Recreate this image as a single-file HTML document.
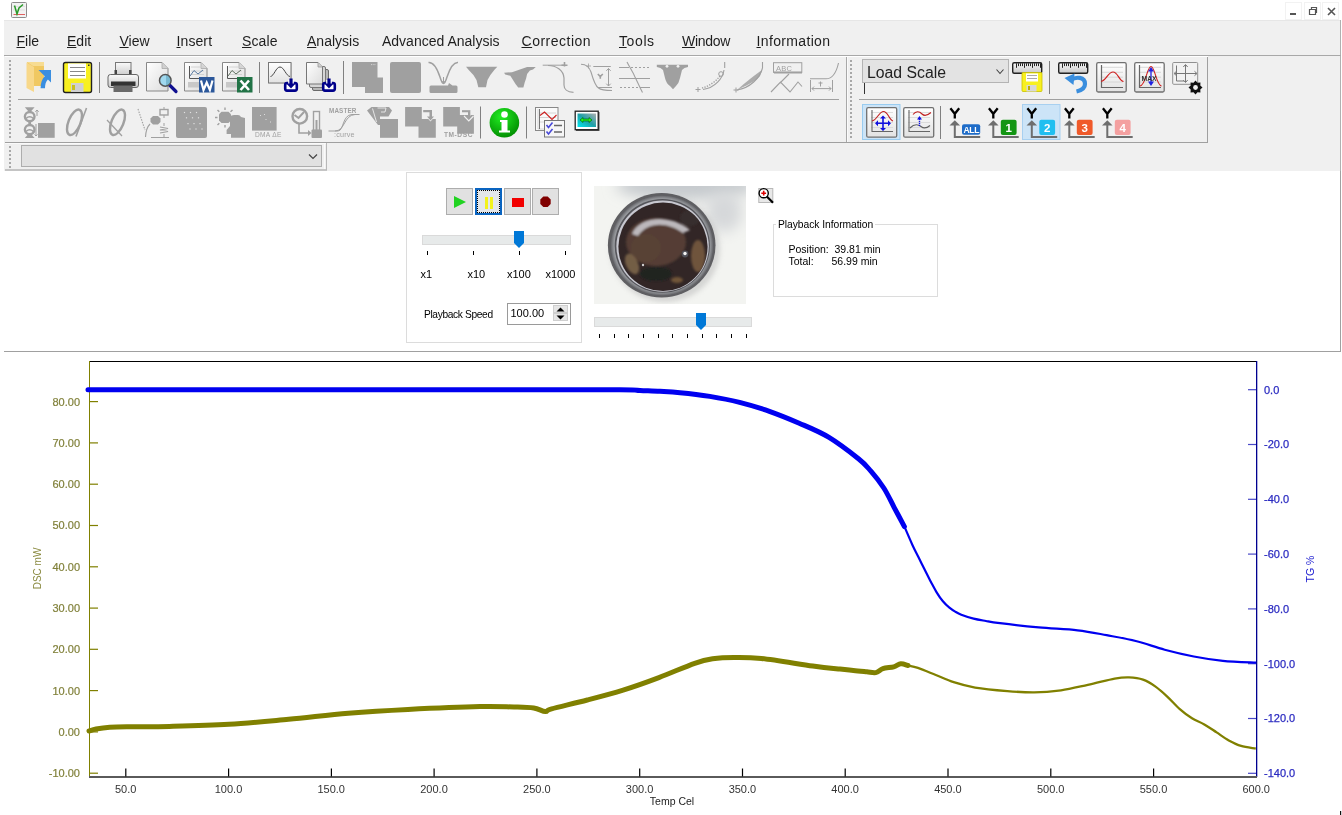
<!DOCTYPE html><html><head><meta charset="utf-8"><title>app</title><style>
html,body{margin:0;padding:0;}
body{width:1342px;height:815px;overflow:hidden;background:#fff;position:relative;will-change:transform;font-family:"Liberation Sans",sans-serif;color:#000;}
.a{position:absolute;}
.mn{position:absolute;top:33px;font-size:14px;color:#1e1e1e;white-space:pre;line-height:16px;}
.mn u{text-decoration:underline;text-underline-offset:0.8px;text-decoration-thickness:1px;}
.grip{position:absolute;width:2px;background:repeating-linear-gradient(to bottom,#a8a8a8 0,#a8a8a8 2px,transparent 2px,transparent 4px);}
.sep{position:absolute;width:1px;background:#a0a0a0;}
.ic{position:absolute;width:32px;height:32px;}
.lbl{position:absolute;white-space:pre;}
</style></head><body>
<svg class="a" style="left:11px;top:2px" width="16" height="16" viewBox="0 0 16 16">
<rect x="0.5" y="0.5" width="15" height="15" rx="1" fill="#f2f2f2" stroke="#8c8c8c"/>
<path d="M2 4.5H14M2 8H14" stroke="#dcdcdc" stroke-width="0.8"/>
<path d="M2.5 12.5 H14" stroke="#e06060" stroke-width="1"/>
<path d="M3.5 3.5 L6 12 L8 6 L12 2.5" stroke="#2a9a2a" stroke-width="1.5" fill="none"/>
</svg>
<div class="a" style="left:1285px;top:2px;width:17px;height:18px;background:#fff;border:1px solid #f2f2f2;box-sizing:border-box"></div>
<div class="a" style="left:1290px;top:13px;width:6px;height:2px;background:#555"></div>
<div class="a" style="left:1304px;top:2px;width:17px;height:18px;background:#fff;border:1px solid #f2f2f2;box-sizing:border-box"></div>
<svg class="a" style="left:1308px;top:6px" width="10" height="10" viewBox="0 0 10 10"><path d="M1.5 3.5h6v5h-6z M3.5 3.5v-2h5v5h-1" fill="none" stroke="#555" stroke-width="1.2"/></svg>
<div class="a" style="left:1322px;top:2px;width:17px;height:18px;background:#fff;border:1px solid #f2f2f2;box-sizing:border-box"></div>
<svg class="a" style="left:1327px;top:7px" width="9" height="9" viewBox="0 0 9 9"><path d="M1 1L8 8M8 1L1 8" stroke="#555" stroke-width="1.6"/></svg>
<div class="a" style="left:4px;top:20px;width:1337px;height:151px;background:#f0f0f0"></div>
<div class="a" style="left:4px;top:20px;width:1337px;height:1px;background:#e6e6e6"></div>
<div class="a" style="left:1340px;top:20px;width:1px;height:151px;background:#b0b0b0"></div>
<div class="a" style="left:4px;top:55px;width:1337px;height:1px;background:#a8a8a8"></div>
<div class="mn" style="left:16.5px;letter-spacing:0px"><u>F</u>ile</div>
<div class="mn" style="left:67px;letter-spacing:0px"><u>E</u>dit</div>
<div class="mn" style="left:119.5px;letter-spacing:0px"><u>V</u>iew</div>
<div class="mn" style="left:176.5px;letter-spacing:0.1px"><u>I</u>nsert</div>
<div class="mn" style="left:242px;letter-spacing:0.1px"><u>S</u>cale</div>
<div class="mn" style="left:307px;letter-spacing:0px"><u>A</u>nalysis</div>
<div class="mn" style="left:382px;letter-spacing:0px">Advanced Analysis</div>
<div class="mn" style="left:521.5px;letter-spacing:0.5px"><u>C</u>orrection</div>
<div class="mn" style="left:619px;letter-spacing:0.6px"><u>T</u>ools</div>
<div class="mn" style="left:682px;letter-spacing:-0.3px"><u>W</u>indow</div>
<div class="mn" style="left:756.5px;letter-spacing:0.35px"><u>I</u>nformation</div>
<div class="a" style="left:5px;top:56px;width:1203px;height:1px;background:#fff"></div>
<div class="a" style="left:846px;top:57px;width:1px;height:85px;background:#a8a8a8"></div><div class="a" style="left:847px;top:57px;width:1px;height:85px;background:#fafafa"></div>
<div class="a" style="left:1207px;top:57px;width:1px;height:85px;background:#a0a0a0"></div>
<div class="a" style="left:5px;top:142px;width:1203px;height:1px;background:#a0a0a0"></div>
<div class="a" style="left:18px;top:99px;width:821px;height:1px;background:#a0a0a0"></div>
<div class="a" style="left:859px;top:99px;width:341px;height:1px;background:#a0a0a0"></div>
<div class="grip" style="left:9px;top:60px;height:80px"></div>
<div class="grip" style="left:850px;top:60px;height:80px"></div>
<div class="a" style="left:5px;top:169px;width:322px;height:2px;background:#c4c4c4"></div>
<div class="a" style="left:5px;top:143px;width:321px;height:1px;background:#fafafa"></div>
<div class="a" style="left:324px;top:144px;width:1px;height:25px;background:#fafafa"></div>
<div class="a" style="left:326px;top:143px;width:1px;height:27px;background:#b8b8b8"></div>
<div class="grip" style="left:9px;top:146px;height:22px"></div>
<div class="a" style="left:21px;top:145px;width:301px;height:22px;background:#e1e1e1;border:1px solid #adadad;box-sizing:border-box"></div>
<svg class="a" style="left:308px;top:153px" width="10" height="7" viewBox="0 0 10 7"><path d="M1 1.5L5 5.5L9 1.5" stroke="#444" stroke-width="1.2" fill="none"/></svg>
<svg class="a" style="left:0;top:0" width="1342" height="175" viewBox="0 0 1342 175">
<defs>
<linearGradient id="pg" x1="0" y1="0" x2="1" y2="1"><stop offset="0" stop-color="#ffffff"/><stop offset="1" stop-color="#dcdcdc"/></linearGradient>
<linearGradient id="pr" x1="0" y1="0" x2="0" y2="1"><stop offset="0" stop-color="#fafafa"/><stop offset="1" stop-color="#c8c8c8"/></linearGradient>
<linearGradient id="bx" x1="0" y1="0" x2="0" y2="1"><stop offset="0" stop-color="#ffffff"/><stop offset="1" stop-color="#e2e2e2"/></linearGradient>
<radialGradient id="grn" cx="0.4" cy="0.3" r="0.75"><stop offset="0" stop-color="#22ee22"/><stop offset="1" stop-color="#008a00"/></radialGradient>
<linearGradient id="mon" x1="0" y1="1" x2="1" y2="0"><stop offset="0" stop-color="#00e8f0"/><stop offset="0.5" stop-color="#20a0a8"/><stop offset="1" stop-color="#b0b0b0"/></linearGradient>
<linearGradient id="lens" x1="0" y1="0" x2="1" y2="0"><stop offset="0" stop-color="#a0d8ee"/><stop offset="0.55" stop-color="#a0d8ee"/><stop offset="0.55" stop-color="#78b8d0"/></linearGradient>
</defs>
<path d="M27 62 H44 V86 H34 Z" fill="#f0c862"/><path d="M27 62 H44 V66 H33 Z" fill="#f7dc92"/>
<path d="M26.5 62.5 L34 67 V92 L26.5 88 Z" fill="#f8d88a"/>
<path d="M38.5 70 H51 V82.5 L47.9 79.4 C45.8 81.6 45 84.5 45 88.3 L40.6 88.3 C40.6 83 42 79.2 44.8 76.3 Z" fill="#3a8ee0"/>
<rect x="63.5" y="62.5" width="28" height="30" rx="2" fill="#f8f020" stroke="#222" stroke-width="1.4"/>
<rect x="68" y="63.5" width="18" height="15" fill="#fff"/>
<path d="M70 67.5H85M70 71.5H85M70 75.5H85" stroke="#888" stroke-width="1"/>
<rect x="71" y="83" width="12.5" height="9" fill="#d0d0d0"/>
<rect x="72" y="85" width="3" height="5" fill="#c8c020"/>
<rect x="88" y="64.5" width="1.5" height="1.5" fill="#333"/>
<rect x="99" y="62" width="1" height="31" fill="#808080"/>
<rect x="115.5" y="62.5" width="15.5" height="14" fill="url(#pr)" stroke="#777" stroke-width="1"/>
<rect x="114.5" y="70" width="2.5" height="7" fill="#444"/><rect x="129" y="70" width="2.5" height="7" fill="#444"/>
<rect x="108" y="74.5" width="30.5" height="13" rx="2.5" fill="url(#pr)" stroke="#666" stroke-width="1"/>
<rect x="111" y="81.5" width="24.5" height="4.5" fill="#333"/>
<rect x="113.5" y="85.5" width="19" height="6.5" fill="#6a6a6a"/>
<path d="M146.5 62.5 H162 L168 68.5 V91 H146.5 Z" fill="url(#pg)" stroke="#888" stroke-width="1"/>
<path d="M162 62.5 V68.5 H168" fill="#d0d0d0" stroke="#aaa" stroke-width="0.8"/>
<path d="M169.5 85 L176 91.5" stroke="#101090" stroke-width="3.2" stroke-linecap="round"/>
<circle cx="165.3" cy="80.4" r="5.8" fill="url(#lens)" stroke="#555" stroke-width="1.5"/>
<path d="M184.5 62.5 H201 L207 68.5 V91 H184.5 Z" fill="url(#pg)" stroke="#888" stroke-width="1"/>
<path d="M201 62.5 V68.5 H207" fill="#d8d8d8" stroke="#aaa" stroke-width="0.8"/>
<path d="M189.5 66 V78.5 H204" fill="none" stroke="#555" stroke-width="1"/>
<path d="M191 67H204M191 71H204M191 74.5H204" stroke="#ccc" stroke-width="0.8"/>
<path d="M190 76 L194 70.5 L198 74 L203 70" fill="none" stroke="#5a7aa0" stroke-width="1"/>
<rect x="188" y="82" width="13" height="5.5" fill="#c8c8c8"/>
<rect x="199" y="77" width="15.5" height="15.5" fill="#2b579a"/>
<path d="M201 80.5 L203.5 90 L206.7 82.5 L209.9 90 L212.5 80.5" fill="none" stroke="#fff" stroke-width="2.2" stroke-linejoin="miter"/>
<path d="M222.5 62.5 H239 L245 68.5 V91 H222.5 Z" fill="url(#pg)" stroke="#888" stroke-width="1"/>
<path d="M239 62.5 V68.5 H245" fill="#d8d8d8" stroke="#aaa" stroke-width="0.8"/>
<path d="M227.5 66 V78.5 H242" fill="none" stroke="#555" stroke-width="1"/>
<path d="M229 67H242M229 71H242M229 74.5H242" stroke="#ccc" stroke-width="0.8"/>
<path d="M228 76 L232 70.5 L236 74 L241 70" fill="none" stroke="#607060" stroke-width="1"/>
<rect x="226" y="82" width="13" height="5.5" fill="#c8c8c8"/>
<rect x="237" y="77" width="15.5" height="15.5" fill="#217346"/>
<path d="M240.5 80.5 L249 90 M249 80.5 L240.5 90" stroke="#fff" stroke-width="2.6"/>
<rect x="259" y="62" width="1" height="31" fill="#808080"/>
<rect x="269" y="63" width="23" height="20.5" fill="#d0d0d0"/>
<rect x="268.5" y="62.5" width="22.5" height="20.5" fill="url(#bx)" stroke="#777" stroke-width="1"/>
<path d="M270.5 76.5 C274 76 276 67 280 67 C284 67 286 76 290 76.5" fill="none" stroke="#444" stroke-width="1"/>
<rect x="285.2" y="83" width="11.6" height="7.6" rx="1.8" fill="#fff" stroke="#00008a" stroke-width="2.6"/><rect x="288.2" y="80" width="5.6" height="3.5" fill="#fff"/><rect x="289.4" y="78.5" width="3.2" height="6" fill="#00008a"/><path d="M286.8 84 H295.2 L291 88.6 Z" fill="#00008a"/>
<rect x="312.5" y="69.5" width="16" height="21" rx="1.5" fill="#b8b8b8" stroke="#6a6a6a" stroke-width="1"/>
<rect x="309.5" y="66.5" width="16" height="21" rx="1.5" fill="#d6d6d6" stroke="#777" stroke-width="1"/>
<path d="M306.5 62.5 H318 L322.5 67 V84 H306.5 Z" fill="url(#pg)" stroke="#777" stroke-width="1"/>
<path d="M318 62.5 V67 H322.5" fill="#d0d0d0" stroke="#999" stroke-width="0.8"/>
<rect x="323.2" y="83" width="11.6" height="7.6" rx="1.8" fill="#fff" stroke="#00008a" stroke-width="2.6"/><rect x="326.2" y="80" width="5.6" height="3.5" fill="#fff"/><rect x="327.4" y="78.5" width="3.2" height="6" fill="#00008a"/><path d="M324.8 84 H333.2 L329 88.6 Z" fill="#00008a"/>
<rect x="343" y="61" width="1" height="33" fill="#808080"/>
<path d="M352 62 H377.5 V77.5 H383 V93 H365 V87 H352 Z" fill="#a0a0a0"/>
<path d="M371 64.6 H376" stroke="#ddd" stroke-width="0.8" stroke-dasharray="1 0.7"/>
<rect x="390" y="62" width="31" height="31" rx="2" fill="#a0a0a0"/>
<path d="M428.5 62.5 C433 62 437 68 440 77 C441.5 82 442.5 83.5 443.5 83.5 C444.5 83.5 445.5 82 447 77 C450 68 453 62 458 62.5" fill="none" stroke="#a0a0a0" stroke-width="1.5"/>
<path d="M443.5 77 V83 M441.5 80.5 L443.5 83 L445.5 80.5" fill="none" stroke="#a0a0a0" stroke-width="1"/>
<path d="M431 85.5 H448 L449 83 L452.5 85.5 H456 Q457.5 85.5 457.5 87 V91.5 Q457.5 93 456 93 H431 Q429.5 93 429.5 91.5 V87 Q429.5 85.5 431 85.5 Z" fill="#a0a0a0"/>
<path d="M466 66.8 H497.3 L494.5 69.8 L490.4 75 L487.5 80 L486 87.3 H478.3 L476.5 80 L473.4 75 L468.5 69.8 Z" fill="#a0a0a0"/>
<path d="M504.1 72.8 L512 72.2 L527.1 67 H535.8 L533 69.6 L529.9 70.6 L527.1 74 L526.1 78.5 L524.7 82.6 L523.4 87.4 H518.2 L515.5 84 L513 79.9 L510.3 75.7 L505.2 74.6 Z" fill="#a0a0a0"/>
<path d="M542.7 65.2 H565" stroke="#a0a0a0" stroke-width="1"/>
<path d="M548 65.5 C556 65.5 563.5 70 564 78 V85 C564 89 567 92.3 573.5 92.3" fill="none" stroke="#a0a0a0" stroke-width="1.2"/>
<path d="M564.5 62 V66.5 M561.5 65.2 H567.5" stroke="#a0a0a0" stroke-width="1.6"/>
<path d="M581 64.3 C586 64.5 589 66 591 72 C593 79 595 86 598.5 88 C601 90 605 90.5 612 90.5" fill="none" stroke="#a0a0a0" stroke-width="1.1"/>
<path d="M593.3 66.5 H610.8 M598 87.5 H612" stroke="#a0a0a0" stroke-width="1"/>
<path d="M608.5 68.5 V86 M606.3 70.8 L608.5 68.5 L610.7 70.8 M606.3 83.7 L608.5 86 L610.7 83.7" fill="none" stroke="#a0a0a0" stroke-width="1"/>
<path d="M597.8 74 L600.3 76.5 L602.8 74 M600.3 76.5 V78.8" fill="none" stroke="#a0a0a0" stroke-width="1.6"/>
<path d="M588.5 63.5 V68.5 M586 66 H591" stroke="#a0a0a0" stroke-width="0.8"/>
<path d="M619 67.5 H650" stroke="#a0a0a0" stroke-width="1" stroke-dasharray="2 2"/>
<path d="M619 67.5 H627 M619 78.5 H650 M642 87.5 H650" stroke="#a0a0a0" stroke-width="1"/>
<path d="M620 87.5 H642" stroke="#a0a0a0" stroke-width="1" stroke-dasharray="2 2"/>
<path d="M627 62 C630 68 633 72 635 77 C637.5 82 640 88 642.5 92.5" fill="none" stroke="#a0a0a0" stroke-width="1.1"/>
<path d="M656.8 64.7 H688 V67 Q684 67.5 682 70 Q681 74 680 78 Q679 83 676 86 L673 89.3 L670 86 Q666 83 665 78 Q664 74 663 70 Q661 67.5 656.8 67 Z" fill="#a0a0a0"/>
<circle cx="667" cy="66.3" r="1.4" fill="#f0f0f0"/><circle cx="678" cy="66.3" r="1.4" fill="#f0f0f0"/>
<path d="M724.7 62 V68 M724 70 C723 78 715 88 703 89.5" fill="none" stroke="#a0a0a0" stroke-width="1.1"/>
<path d="M720 76 C716 81 710 86 702 88" fill="none" stroke="#a0a0a0" stroke-width="1.4" stroke-dasharray="1.3 1.3"/>
<path d="M698 87 V92 M695.5 89.5 H700.5" stroke="#a0a0a0" stroke-width="1"/>
<circle cx="721" cy="74" r="2.3" fill="none" stroke="#a0a0a0" stroke-width="1"/>
<path d="M762.5 62 V68 M762.5 68 C760 78 750 88 737 90" fill="none" stroke="#a0a0a0" stroke-width="1.1"/>
<path d="M762 70 C756 74 746 82 737 90 C745 86 755 82 760 76 Z" fill="#a0a0a0" opacity="0.85"/>
<path d="M736 87.5 V92.5 M733.5 90 H738.5" stroke="#a0a0a0" stroke-width="1"/>
<rect x="773.5" y="62.7" width="28.3" height="9.7" fill="#f0f0f0" stroke="#a0a0a0" stroke-width="1"/>
<rect x="774" y="71.5" width="28" height="2" fill="#a0a0a0"/>
<text x="776" y="70.5" font-family="Liberation Sans" font-size="7.5" fill="#a0a0a0" letter-spacing="0.2">ABC_</text>
<path d="M789 74 L780 83 M771 92 L780.5 82 L790 92 L798 82 L802 86.5" fill="none" stroke="#a0a0a0" stroke-width="1.1"/>
<path d="M810 78.8 H826 C832 78.8 836 74 838.5 63" fill="none" stroke="#a0a0a0" stroke-width="1.1"/>
<path d="M810.5 80 V92 M832.5 80 V92 M812 88.6 H831 M814 86.6 L812 88.6 L814 90.6 M829 86.6 L831 88.6 L829 90.6" fill="none" stroke="#a0a0a0" stroke-width="1"/>
<path d="M820.5 81.5 V86.5 M818.5 83 H822.5" stroke="#a0a0a0" stroke-width="1"/>
<path d="M24.8 107.3 H34.6 L31.3 111 H28.1 Z M24.8 137.9 H34.6 L31.3 134.2 H28.1 Z M28.3 121.5 H31.1 V125 H28.3 Z" fill="#a0a0a0"/>
<ellipse cx="29.7" cy="116.6" rx="4.8" ry="4.6" fill="none" stroke="#a0a0a0" stroke-width="2.4"/>
<ellipse cx="29.7" cy="129.6" rx="4.8" ry="4.6" fill="none" stroke="#a0a0a0" stroke-width="2.4"/>
<path d="M26 118.5 Q29.7 115 33.4 118.5 M26 131.5 Q29.7 128 33.4 131.5" fill="none" stroke="#a0a0a0" stroke-width="1.6"/>
<path d="M37 116 V110 M35.3 111.7 L37 110 L38.7 111.7 M36 124 V136 M34.5 134.5 L36 136 L37.5 134.5" fill="none" stroke="#a0a0a0" stroke-width="1"/>
<rect x="38" y="123" width="16.7" height="14.8" fill="#a0a0a0"/>
<ellipse cx="74.5" cy="122.3" rx="6" ry="13.5" transform="rotate(22 74.5 122.3)" fill="none" stroke="#a0a0a0" stroke-width="2.4"/>
<path d="M86.5 108 L76 136.5" stroke="#a0a0a0" stroke-width="1.6"/>
<ellipse cx="117.5" cy="122.3" rx="6" ry="13.5" transform="rotate(22 117.5 122.3)" fill="none" stroke="#a0a0a0" stroke-width="2.4"/>
<path d="M107 120 L122 136" stroke="#a0a0a0" stroke-width="1.2"/>
<path d="M138 109 L145 130" stroke="#a0a0a0" stroke-width="1.1" stroke-dasharray="1.5 1.2"/>
<path d="M150 124 Q146 128 145.5 137" fill="none" stroke="#a0a0a0" stroke-width="1.1"/>
<path d="M153 116 H158 L160.5 118.5 V122 L158 124.5 H153 L150.5 122 V118.5 Z" fill="#a0a0a0"/>
<rect x="160" y="109.5" width="8" height="5.5" fill="none" stroke="#a0a0a0" stroke-width="1.4"/><path d="M164 107 V109 M164 115 V118 M164 123 V126 M164 134 V137" stroke="#a0a0a0" stroke-width="1"/>
<path d="M160 127 L168 128.5 L160 130 L168 131.5 L160 133" fill="none" stroke="#a0a0a0" stroke-width="1.2"/>
<path d="M151 137.5 H169" stroke="#a0a0a0" stroke-width="1"/>
<rect x="176" y="107" width="31" height="31" rx="2" fill="#a0a0a0"/>
<rect x="183.9" y="111.9" width="1.2" height="1.2" fill="#e0e0e0"/><rect x="189.9" y="111.9" width="1.2" height="1.2" fill="#e0e0e0"/><rect x="195.9" y="111.9" width="1.2" height="1.2" fill="#e0e0e0"/><rect x="185.9" y="117.2" width="1.2" height="1.2" fill="#e0e0e0"/><rect x="191.9" y="117.2" width="1.2" height="1.2" fill="#e0e0e0"/><rect x="197.9" y="117.2" width="1.2" height="1.2" fill="#e0e0e0"/><rect x="187.4" y="123.0" width="1.2" height="1.2" fill="#e0e0e0"/><rect x="193.4" y="123.0" width="1.2" height="1.2" fill="#e0e0e0"/><rect x="199.4" y="123.0" width="1.2" height="1.2" fill="#e0e0e0"/><rect x="189.4" y="128.4" width="1.2" height="1.2" fill="#e0e0e0"/><rect x="195.4" y="128.4" width="1.2" height="1.2" fill="#e0e0e0"/><rect x="201.4" y="128.4" width="1.2" height="1.2" fill="#e0e0e0"/>
<path d="M221.5 111.8 H228.5 L231 114.3 V120.5 L228.5 123 H221.5 L219 120.5 V114.3 Z" fill="#a0a0a0"/>
<path d="M225 107.5 V110 M225 125 V127.5 M215 117.5 H217.5 M217.5 110 L219.3 111.8 M230.5 111.8 L232.5 110 M217.5 125 L219.3 123.2" stroke="#a0a0a0" stroke-width="1.4"/>
<path d="M230 117 Q231 115 234 115 H238 Q240 115 241 117 L245 118 V137.8 H231 V134 H226.6 V130 L230 126 Z" fill="#a0a0a0"/>
<rect x="252" y="107" width="24.6" height="23.6" fill="#a0a0a0"/>
<rect x="260" y="115" width="1" height="1" fill="#ddd"/><rect x="264" y="114" width="1" height="1" fill="#ddd"/><rect x="265.5" y="119" width="1" height="1" fill="#ddd"/><rect x="270" y="121.5" width="1" height="1" fill="#ddd"/>
<text x="255" y="137.2" font-family="Liberation Sans" font-size="6.6" fill="#a0a0a0" letter-spacing="0.3">DMA ΔE</text>
<circle cx="299.8" cy="116.3" r="7.3" fill="none" stroke="#a0a0a0" stroke-width="2.4"/>
<path d="M294.5 115 L298.5 118 L304 112" fill="none" stroke="#a0a0a0" stroke-width="2"/>
<path d="M299 124 V133 H309" fill="none" stroke="#a0a0a0" stroke-width="1.6"/><path d="M308 130 L311.5 133 L308 136 Z" fill="#a0a0a0"/>
<rect x="313.5" y="111.5" width="6" height="19" fill="none" stroke="#a0a0a0" stroke-width="1.4"/><rect x="315.5" y="120" width="2" height="10" fill="#a0a0a0"/>
<rect x="311.5" y="129.5" width="10.5" height="8.5" rx="1" fill="#a0a0a0"/>
<text x="329" y="112.8" font-family="Liberation Sans" font-size="6.3" font-weight="bold" fill="#a0a0a0" letter-spacing="0.15">MASTER</text>
<path d="M328.5 131 H338 C344 131 342 115 352 114.5 H359.5 M335 131 C345 131 344 115 355 114.5" fill="none" stroke="#a0a0a0" stroke-width="1"/>
<text x="334" y="137" font-family="Liberation Sans" font-size="7.2" fill="#a0a0a0" letter-spacing="0.2">:curve</text>
<path d="M367 110.5 L371.5 107 H389 L392 110.5 L388.5 116.5 H380 V125 L378 125 Z" fill="#a0a0a0"/>
<path d="M372.5 108.5 L376.5 122 M377.5 108 H386 L385 112 H381" fill="none" stroke="#ececec" stroke-width="0.9"/>
<rect x="380" y="119" width="18" height="18.8" fill="#a0a0a0"/>
<path d="M405.1 107 H421.8 V118.9 H435.8 V137.7 H418.5 V126.4 H405.1 Z" fill="#a0a0a0"/>
<path d="M427 116.5 H434 L430.5 120.5 Z" fill="none" stroke="#f0f0f0" stroke-width="1.3"/>
<path d="M423.2 110 H432 V117 H429.5 V112.3 H423.2 Z M427 116.5 H434 L430.5 120.5 Z" fill="#a0a0a0"/>
<path d="M443.2 107 H459.9 V115 H473.9 V133.8 H457.2 V126.4 H443.2 Z" fill="#a0a0a0"/>
<path d="M462 110 H470.5 V116 H468 V112.2 H462 Z" fill="#a0a0a0"/>
<path d="M464 116 L468.8 121 L473.5 116" fill="none" stroke="#f0f0f0" stroke-width="1.1"/>
<path d="M462 110 H470.5 V116" fill="none" stroke="#f0f0f0" stroke-width="0.6" opacity="0.6"/>
<text x="444" y="137.2" font-family="Liberation Sans" font-size="6.6" font-weight="bold" fill="#a0a0a0" letter-spacing="0.55">TM-DSC</text>
<rect x="480" y="106.5" width="1" height="32" fill="#808080"/>
<circle cx="504.4" cy="122.8" r="14.8" fill="url(#grn)"/>
<circle cx="504.5" cy="114.5" r="3.3" fill="#fff"/>
<path d="M500 120 H507.5 V130.5 H510 V132.5 H499 V130.5 H501.5 V122 H500 Z" fill="#fff"/>
<rect x="526" y="106.5" width="1" height="32" fill="#808080"/>
<rect x="535.5" y="107.5" width="22.5" height="23" fill="#fafafa" stroke="#888" stroke-width="1"/>
<path d="M538 109 V129 H556 M539 113H556M539 117.5H556M539 122H556" fill="none" stroke="#ccc" stroke-width="0.8"/>
<path d="M539.5 109 V129" stroke="#555" stroke-width="0.8"/>
<path d="M540 115.5 L544.5 112 L552 119.5 L556.5 115" fill="none" stroke="#cc2020" stroke-width="1.1"/>
<rect x="544.5" y="120.5" width="20" height="16.5" fill="#f6f6f6" stroke="#777" stroke-width="1"/>
<path d="M546.5 125 L548.5 127.5 L552.5 122.5 M546.5 131.5 L548.5 134 L552.5 129" fill="none" stroke="#4848d8" stroke-width="1.6"/>
<path d="M554 125.5 H562 M554 132 H562" stroke="#666" stroke-width="1.3"/>
<rect x="576" y="112" width="23.5" height="19" fill="#555"/>
<rect x="575.2" y="111.2" width="23" height="18.5" fill="#fff" stroke="#222" stroke-width="1.3"/>
<rect x="577.5" y="113.5" width="18.5" height="13.5" fill="url(#mon)"/>
<path d="M580 120 L583 117.5 V119 H589 V117.5 L592 120 L589 122.5 V121 H583 V122.5 Z" fill="#20f020" stroke="#006000" stroke-width="0.6"/>
<rect x="862.5" y="59.5" width="146" height="23" fill="#e3e3e3" stroke="#b4b4b4" stroke-width="1"/>
<text x="867" y="77.7" font-family="Liberation Sans" font-size="15.8" fill="#222">Load Scale</text>
<path d="M996.5 69.5 L1000 73.5 L1003.5 69.5" fill="none" stroke="#444" stroke-width="1.1"/>
<rect x="864" y="83" width="1" height="11" fill="#333"/>
<rect x="1012.7" y="62.7" width="29" height="10.5" rx="1.5" fill="url(#pr)" stroke="#222" stroke-width="1.4"/><rect x="1016" y="63.3" width="1" height="4.5" fill="#222"/><rect x="1018" y="63.3" width="1" height="2.8" fill="#222"/><rect x="1020" y="63.3" width="1" height="2.8" fill="#222"/><rect x="1022" y="63.3" width="1" height="2.8" fill="#222"/><rect x="1024" y="63.3" width="1" height="4.5" fill="#222"/><rect x="1026" y="63.3" width="1" height="2.8" fill="#222"/><rect x="1028" y="63.3" width="1" height="2.8" fill="#222"/><rect x="1030" y="63.3" width="1" height="2.8" fill="#222"/><rect x="1032" y="63.3" width="1" height="4.5" fill="#222"/><rect x="1034" y="63.3" width="1" height="2.8" fill="#222"/><rect x="1036" y="63.3" width="1" height="2.8" fill="#222"/><rect x="1038" y="63.3" width="1" height="2.8" fill="#222"/><rect x="1040" y="63.3" width="1" height="4.5" fill="#222"/>
<rect x="1022" y="72.5" width="20" height="19" rx="1" fill="#f8f020" stroke="#c8c000" stroke-width="0.8"/>
<rect x="1026" y="73.5" width="12" height="8" fill="#fff"/><rect x="1027" y="75" width="10" height="1" fill="#aaa"/><rect x="1027" y="78" width="10" height="1" fill="#aaa"/>
<rect x="1026.5" y="85" width="10" height="6.5" fill="#d8d8d8"/><rect x="1028" y="86" width="2" height="4" fill="#c0b000"/>
<rect x="1049" y="61" width="1" height="33" fill="#808080"/>
<rect x="1058.7" y="62.7" width="29" height="10.5" rx="1.5" fill="url(#pr)" stroke="#222" stroke-width="1.4"/><rect x="1062" y="63.3" width="1" height="4.5" fill="#222"/><rect x="1064" y="63.3" width="1" height="2.8" fill="#222"/><rect x="1066" y="63.3" width="1" height="2.8" fill="#222"/><rect x="1068" y="63.3" width="1" height="2.8" fill="#222"/><rect x="1070" y="63.3" width="1" height="4.5" fill="#222"/><rect x="1072" y="63.3" width="1" height="2.8" fill="#222"/><rect x="1074" y="63.3" width="1" height="2.8" fill="#222"/><rect x="1076" y="63.3" width="1" height="2.8" fill="#222"/><rect x="1078" y="63.3" width="1" height="4.5" fill="#222"/><rect x="1080" y="63.3" width="1" height="2.8" fill="#222"/><rect x="1082" y="63.3" width="1" height="2.8" fill="#222"/><rect x="1084" y="63.3" width="1" height="2.8" fill="#222"/><rect x="1086" y="63.3" width="1" height="4.5" fill="#222"/>
<path d="M1070.5 80.5 C1076 76 1085 77 1085 84 C1085 88 1081 90.5 1076.5 91.5" fill="none" stroke="#3a8ede" stroke-width="4.2"/>
<path d="M1064.5 78 L1074.5 73.5 L1073.5 85 Z" fill="#3a8ede"/>
<rect x="1096.7" y="62.7" width="29.5" height="29.3" rx="1.5" fill="url(#bx)" stroke="#707070" stroke-width="1.3"/><path d="M1102 67.3 H1123 M1102 72.3 H1123 M1102 77.2 H1123 M1102 82 H1123" stroke="#d0d0d0" stroke-width="0.8"/><path d="M1101.5 65 V87.5 H1123" fill="none" stroke="#666" stroke-width="1.2"/>
<path d="M1101 81.5 C1106 81 1108 72 1113 72 C1118 72 1119 81 1123.5 81.5" fill="none" stroke="#d02020" stroke-width="1.2"/>
<rect x="1134.7" y="62.7" width="29.5" height="29.3" rx="1.5" fill="url(#bx)" stroke="#707070" stroke-width="1.3"/><path d="M1140 67.3 H1161 M1140 72.3 H1161 M1140 77.2 H1161 M1140 82 H1161" stroke="#d0d0d0" stroke-width="0.8"/><path d="M1139.5 65 V87.5 H1161" fill="none" stroke="#666" stroke-width="1.2"/>
<path d="M1140 86 C1146 85 1147 66.5 1151 66.5 C1155 66.5 1156 85 1161.5 86" fill="none" stroke="#d02020" stroke-width="1.1"/>
<path d="M1151 69 V84" stroke="#2020e0" stroke-width="1.3"/><path d="M1148 71.5 L1151 67 L1154 71.5 Z M1148 81.5 L1151 86 L1154 81.5 Z" fill="#2020e0"/>
<text x="1141.5" y="80.7" font-family="Liberation Sans" font-size="6.8" font-weight="bold" fill="#333">MAX</text>
<rect x="1172.7" y="62.5" width="25" height="21.8" rx="1" fill="#f2f2f2" stroke="#909090" stroke-width="1"/>
<path d="M1185.5 65 V82 M1174.5 73.5 H1196.5 M1176.5 65.5 V81 H1184" fill="none" stroke="#777" stroke-width="1"/>
<path d="M1183.3 67 L1185.5 64.5 L1187.7 67 M1183.3 80 L1185.5 82.5 L1187.7 80 M1176.5 71.3 L1174 73.5 L1176.5 75.7 M1194.5 71.3 L1197 73.5 L1194.5 75.7" fill="none" stroke="#777" stroke-width="1"/>
<polygon points="1202.50,87.50 1200.30,89.49 1200.45,92.45 1197.49,92.30 1195.50,94.50 1193.51,92.30 1190.55,92.45 1190.70,89.49 1188.50,87.50 1190.70,85.51 1190.55,82.55 1193.51,82.70 1195.50,80.50 1197.49,82.70 1200.45,82.55 1200.30,85.51" fill="#111"/><circle cx="1195.5" cy="87.5" r="2.4" fill="#f0f0f0"/>
<rect x="862.5" y="104.5" width="37.5" height="35" fill="#cce4f7" stroke="#99ccf0" stroke-width="1"/>
<rect x="1022.5" y="104.5" width="37.5" height="35" fill="#cce4f7" stroke="#a8d0f0" stroke-width="1"/>
<rect x="866.7" y="107.7" width="30" height="29.5" rx="1.5" fill="url(#bx)" stroke="#707070" stroke-width="1.3"/><path d="M871 112.5 H893 M871 117.5 H893 M871 122.5 H893 M871 127.5 H893" stroke="#d6d6d6" stroke-width="0.8"/><path d="M872 110 V131.5 H893" fill="none" stroke="#666" stroke-width="1.1"/>
<path d="M872 121 C877 120 879 111.5 883.5 111.5 C888 111.5 889 120 893 121" fill="none" stroke="#c02020" stroke-width="1.1"/>
<path d="M883 118 V128.5 M877.5 123.3 H888.5" stroke="#1010e0" stroke-width="1.6"/><path d="M880 118.5 L883 115.5 L886 118.5 Z M880 128 L883 131 L886 128 Z M878 120.3 L875 123.3 L878 126.3 Z M888 120.3 L891 123.3 L888 126.3 Z" fill="#1010e0"/>
<rect x="903.7" y="107.7" width="30" height="29.5" rx="1.5" fill="url(#bx)" stroke="#707070" stroke-width="1.3"/><path d="M908 112.5 H930 M908 117.5 H930 M908 122.5 H930 M908 127.5 H930" stroke="#d6d6d6" stroke-width="0.8"/><path d="M909 110 V131.5 H930" fill="none" stroke="#666" stroke-width="1.1"/>
<path d="M913 114.5 C916 111 919 111 922 114 C925 117 928 115 931 112.5" fill="none" stroke="#c02020" stroke-width="1.1"/>
<path d="M910 128 C914 124 917 123.5 921 126.5 C924 129 927 128 930 125.5" fill="none" stroke="#606060" stroke-width="1.1"/>
<path d="M919.5 119 V126" stroke="#1010e0" stroke-width="1.4" stroke-dasharray="1.2 0.8"/><path d="M917 119.5 L919.5 116 L922 119.5 Z" fill="#1010e0"/>
<rect x="940" y="106" width="1" height="33" fill="#808080"/>
<path d="M950.4 108.3 L954.8 113.8 L959.2 108.3 M954.8 113.8 V118.6" fill="none" stroke="#000" stroke-width="2.3"/>
<path d="M954.8 124 V136.9 H980.2" fill="none" stroke="#6e6e6e" stroke-width="2"/>
<path d="M949.5 125.5 L954.8 120.2 L960.1 125.5 Z" fill="#6e6e6e"/>
<rect x="962.0" y="124.3" width="18.2" height="10.4" rx="2" fill="#1e6cc8"/>
<text x="971.3" y="133.2" font-family="Liberation Sans" font-size="8.6" font-weight="bold" text-anchor="middle" fill="#fff" letter-spacing="-0.3">ALL</text>
<path d="M988.9 108.3 L993.3 113.8 L997.7 108.3 M993.3 113.8 V118.6" fill="none" stroke="#000" stroke-width="2.3"/>
<path d="M993.3 124 V136.9 H1018.7" fill="none" stroke="#6e6e6e" stroke-width="2"/>
<path d="M988 125.5 L993.3 120.2 L998.6 125.5 Z" fill="#6e6e6e"/>
<rect x="1000.8" y="119.8" width="15.8" height="15.2" rx="2" fill="#149614"/>
<text x="1008.8" y="132.3" font-family="Liberation Sans" font-size="11.5" font-weight="bold" text-anchor="middle" fill="#fff">1</text>
<path d="M1027.4 108.3 L1031.8 113.8 L1036.2 108.3 M1031.8 113.8 V118.6" fill="none" stroke="#000" stroke-width="2.3"/>
<path d="M1031.8 124 V136.9 H1057.2" fill="none" stroke="#6e6e6e" stroke-width="2"/>
<path d="M1026.5 125.5 L1031.8 120.2 L1037.1 125.5 Z" fill="#6e6e6e"/>
<rect x="1039.3" y="119.8" width="15.8" height="15.2" rx="2" fill="#20bff0"/>
<text x="1047.3" y="132.3" font-family="Liberation Sans" font-size="11.5" font-weight="bold" text-anchor="middle" fill="#fff">2</text>
<path d="M1064.9 108.3 L1069.3 113.8 L1073.7 108.3 M1069.3 113.8 V118.6" fill="none" stroke="#000" stroke-width="2.3"/>
<path d="M1069.3 124 V136.9 H1094.7" fill="none" stroke="#6e6e6e" stroke-width="2"/>
<path d="M1064 125.5 L1069.3 120.2 L1074.6 125.5 Z" fill="#6e6e6e"/>
<rect x="1076.8" y="119.8" width="15.8" height="15.2" rx="2" fill="#f05a2a"/>
<text x="1084.8" y="132.3" font-family="Liberation Sans" font-size="11.5" font-weight="bold" text-anchor="middle" fill="#fff">3</text>
<path d="M1102.9 108.3 L1107.3 113.8 L1111.7 108.3 M1107.3 113.8 V118.6" fill="none" stroke="#000" stroke-width="2.3"/>
<path d="M1107.3 124 V136.9 H1132.7" fill="none" stroke="#6e6e6e" stroke-width="2"/>
<path d="M1102 125.5 L1107.3 120.2 L1112.6 125.5 Z" fill="#6e6e6e"/>
<rect x="1114.8" y="119.8" width="15.8" height="15.2" rx="2" fill="#f4a0a0"/>
<text x="1122.8" y="132.3" font-family="Liberation Sans" font-size="11.5" font-weight="bold" text-anchor="middle" fill="#fff">4</text>
</svg>
<div class="a" style="left:4px;top:351px;width:1337px;height:1px;background:#a0a0a0"></div>
<div class="a" style="left:1340px;top:171px;width:1px;height:181px;background:#a0a0a0"></div>
<div class="a" style="left:406px;top:172px;width:176px;height:171px;border:1px solid #dcdcdc;box-sizing:border-box"></div>
<div class="a" style="left:446px;top:188px;width:27px;height:27px;background:#e1e1e1;border:1px solid #adadad;box-sizing:border-box"></div>
<div class="a" style="left:504px;top:188px;width:27px;height:27px;background:#e1e1e1;border:1px solid #adadad;box-sizing:border-box"></div>
<div class="a" style="left:532px;top:188px;width:27px;height:27px;background:#e1e1e1;border:1px solid #adadad;box-sizing:border-box"></div>
<div class="a" style="left:475px;top:188px;width:27px;height:27px;background:#e4e7ea;border:2px solid #0a64c0;box-sizing:border-box"></div>
<div class="a" style="left:477px;top:190px;width:23px;height:23px;border:1px dotted #000;box-sizing:border-box"></div>
<svg class="a" style="left:446px;top:188px" width="27" height="27"><path d="M8 8L20 14L8 20Z" fill="#21d321"/></svg>
<div class="a" style="left:485px;top:197px;width:3px;height:12px;background:#f2f21c"></div>
<div class="a" style="left:490px;top:197px;width:3px;height:12px;background:#f2f21c"></div>
<div class="a" style="left:512px;top:198px;width:12px;height:9px;background:#f20000"></div>
<svg class="a" style="left:532px;top:188px" width="27" height="27"><path d="M11.3 8.5h4.4l3 3v4.4l-3 3h-4.4l-3-3v-4.4z" fill="#800000"/></svg>
<div class="a" style="left:422px;top:235px;width:149px;height:10px;background:#e7eaea;border:1px solid #dadada;box-sizing:border-box"></div>
<svg class="a" style="left:513px;top:230px" width="12" height="19"><path d="M1 1h10v12l-5 5l-5-5z" fill="#0078d7"/></svg>
<div class="a" style="left:427px;top:251px;width:1px;height:4px;background:#000"></div>
<div class="a" style="left:473px;top:251px;width:1px;height:4px;background:#000"></div>
<div class="a" style="left:519px;top:251px;width:1px;height:4px;background:#000"></div>
<div class="a" style="left:565px;top:251px;width:1px;height:4px;background:#000"></div>
<div class="lbl" style="left:420.5px;top:268px;font-size:11px;line-height:12px">x1</div>
<div class="lbl" style="left:467.5px;top:268px;font-size:11px;line-height:12px">x10</div>
<div class="lbl" style="left:507px;top:268px;font-size:11px;line-height:12px">x100</div>
<div class="lbl" style="left:545.5px;top:268px;font-size:11px;line-height:12px">x1000</div>
<div class="lbl" style="left:424px;top:309px;font-size:10.2px;line-height:12px;letter-spacing:-0.35px">Playback Speed</div>
<div class="a" style="left:507px;top:303px;width:64px;height:22px;border:1px solid #9a9a9a;box-sizing:border-box;background:#fff"></div>
<div class="lbl" style="left:510.5px;top:306px;font-size:11px;line-height:14px">100.00</div>
<div class="a" style="left:553px;top:305px;width:15px;height:8px;background:#e6e6e6;border:1px solid #cfcfcf;box-sizing:border-box"></div>
<div class="a" style="left:553px;top:313px;width:15px;height:8px;background:#e6e6e6;border:1px solid #cfcfcf;box-sizing:border-box"></div>
<svg class="a" style="left:553px;top:305px" width="15" height="17"><path d="M3.5 6.5L7.5 2.5L11.5 6.5Z M3.5 10.5L7.5 14.5L11.5 10.5Z" fill="#000"/></svg>
<svg class="a" style="left:594px;top:186px" width="152" height="118" viewBox="0 0 152 118">
<defs>
<filter id="b1" x="-30%" y="-30%" width="160%" height="160%"><feGaussianBlur stdDeviation="7"/></filter>
<filter id="b2" x="-30%" y="-30%" width="160%" height="160%"><feGaussianBlur stdDeviation="2.5"/></filter>
<filter id="b3" x="-30%" y="-30%" width="160%" height="160%"><feGaussianBlur stdDeviation="1.3"/></filter>
<filter id="b4" x="-30%" y="-30%" width="160%" height="160%"><feGaussianBlur stdDeviation="0.6"/></filter>
<radialGradient id="ringg" cx="0.5" cy="0.5" r="0.5"><stop offset="0.88" stop-color="#b4b6ba"/><stop offset="0.95" stop-color="#8a8c90"/><stop offset="1" stop-color="#606064"/></radialGradient>
<clipPath id="cl"><rect width="152" height="118"/></clipPath>
<clipPath id="inner"><ellipse cx="69" cy="60.8" rx="44.6" ry="44.2"/></clipPath>
</defs>
<g clip-path="url(#cl)">
<rect width="152" height="118" fill="#f3f4f1"/>
<ellipse cx="92" cy="0" rx="70" ry="14" fill="#c6cace" filter="url(#b1)"/>
<ellipse cx="130" cy="26" rx="18" ry="20" fill="#d6d8da" filter="url(#b1)"/>
<ellipse cx="71" cy="63" rx="55" ry="53" fill="#b8b8b8" filter="url(#b2)" opacity="0.5"/>
<g filter="url(#b4)">
<ellipse cx="67.7" cy="59.3" rx="53.8" ry="52.2" fill="#5e5e62"/>
<ellipse cx="68" cy="59.5" rx="51.5" ry="50.2" fill="url(#ringg)"/>
<ellipse cx="68.3" cy="59.8" rx="47.6" ry="46.9" fill="#55555a"/>
<ellipse cx="68.6" cy="60.2" rx="46.2" ry="45.6" fill="#c8c8d0"/>
<ellipse cx="69" cy="60.8" rx="44.6" ry="44.2" fill="#302728"/>
</g>
<g clip-path="url(#inner)">
<g filter="url(#b3)">
<ellipse cx="62" cy="56" rx="30" ry="24" fill="#543e34"/>
<ellipse cx="52" cy="62" rx="15" ry="14" fill="#5a4234" opacity="0.9"/>
<path d="M38 48 C44 32 74 26 96 44 L89 47 C74 36 54 35 44 50 Z" fill="#bcb8bc"/>
<ellipse cx="104" cy="70" rx="7" ry="16" fill="#7a5c40" opacity="0.85"/>
<ellipse cx="38" cy="78" rx="6" ry="11" fill="#8a7050" opacity="0.75" transform="rotate(-25 38 78)"/>
<ellipse cx="83" cy="94" rx="6" ry="3" fill="#8a6a40" opacity="0.7"/>
<ellipse cx="62" cy="88" rx="16" ry="7" fill="#1c2420" opacity="0.9"/>
<ellipse cx="96" cy="32" rx="10" ry="8" fill="#3a3030" opacity="0.8"/>
</g>
</g>
<circle cx="91" cy="68" r="3.4" fill="#505058"/>
<circle cx="91" cy="67.5" r="1.7" fill="#f4f4f4"/>
<circle cx="49" cy="79" r="1.2" fill="#e0e0e0" opacity="0.9"/>
</g>
</svg>
<div class="a" style="left:594px;top:317px;width:158px;height:10px;background:#e7eaea;border:1px solid #dadada;box-sizing:border-box"></div>
<svg class="a" style="left:695px;top:312px" width="12" height="19"><path d="M1 1h10v12l-5 5l-5-5z" fill="#0078d7"/></svg>
<div class="a" style="left:599.0px;top:334px;width:1px;height:4px;background:#000"></div>
<div class="a" style="left:613.5px;top:334px;width:1px;height:4px;background:#000"></div>
<div class="a" style="left:628.0px;top:334px;width:1px;height:4px;background:#000"></div>
<div class="a" style="left:642.5px;top:334px;width:1px;height:4px;background:#000"></div>
<div class="a" style="left:657.5px;top:334px;width:1px;height:4px;background:#000"></div>
<div class="a" style="left:672.0px;top:334px;width:1px;height:4px;background:#000"></div>
<div class="a" style="left:686.5px;top:334px;width:1px;height:4px;background:#000"></div>
<div class="a" style="left:701.5px;top:334px;width:1px;height:4px;background:#000"></div>
<div class="a" style="left:716.0px;top:334px;width:1px;height:4px;background:#000"></div>
<div class="a" style="left:730.5px;top:334px;width:1px;height:4px;background:#000"></div>
<div class="a" style="left:745.5px;top:334px;width:1px;height:4px;background:#000"></div>
<svg class="a" style="left:756px;top:186px" width="20" height="20" viewBox="0 0 20 20"><rect x="2.8" y="2.5" width="14" height="14" fill="#e8e8e8" stroke="#b8b8b8" stroke-width="1"/><circle cx="7.7" cy="7.2" r="4.6" fill="#fff" stroke="#000" stroke-width="1.4"/><path d="M10.8 10.5L17 16.7" stroke="#000" stroke-width="2.2"/><path d="M7.7 4.8v4.8M5.3 7.2h4.8" stroke="#d00" stroke-width="1.6"/></svg>
<div class="a" style="left:773px;top:224px;width:165px;height:73px;border:1px solid #dcdcdc;box-sizing:border-box"></div>
<div class="lbl" style="left:776px;top:219px;font-size:10.3px;line-height:12px;background:#fff;padding:0 2px;letter-spacing:-0.05px">Playback Information</div>
<div class="lbl" style="left:788.5px;top:243px;font-size:10.5px;line-height:12px">Position:</div>
<div class="lbl" style="left:834.5px;top:243px;font-size:10.5px;line-height:12px">39.81 min</div>
<div class="lbl" style="left:788.5px;top:255.3px;font-size:10.5px;line-height:12px">Total:</div>
<div class="lbl" style="left:831.5px;top:255.3px;font-size:10.5px;line-height:12px">56.99 min</div>
<svg class="a" style="left:0;top:0" width="1342" height="815" viewBox="0 0 1342 815">
<g font-family="Liberation Sans" font-size="11">
<rect x="89" y="361" width="1167" height="1" fill="#000"/>
<rect x="89" y="361" width="1" height="416" fill="#808000"/>
<rect x="1256" y="361" width="1.3" height="416" fill="#000090"/>
<rect x="89" y="776" width="1168" height="2" fill="#5a5a5a"/>
<rect x="89" y="401.0" width="9" height="1.2" fill="#808000"/>
<text x="80" y="405.5" text-anchor="end" fill="#80803a" stroke="#80803a" stroke-width="0.2">80.00</text>
<rect x="89" y="442.3" width="9" height="1.2" fill="#808000"/>
<text x="80" y="446.8" text-anchor="end" fill="#80803a" stroke="#80803a" stroke-width="0.2">70.00</text>
<rect x="89" y="483.6" width="9" height="1.2" fill="#808000"/>
<text x="80" y="488.1" text-anchor="end" fill="#80803a" stroke="#80803a" stroke-width="0.2">60.00</text>
<rect x="89" y="524.9" width="9" height="1.2" fill="#808000"/>
<text x="80" y="529.4" text-anchor="end" fill="#80803a" stroke="#80803a" stroke-width="0.2">50.00</text>
<rect x="89" y="566.2" width="9" height="1.2" fill="#808000"/>
<text x="80" y="570.7" text-anchor="end" fill="#80803a" stroke="#80803a" stroke-width="0.2">40.00</text>
<rect x="89" y="607.5" width="9" height="1.2" fill="#808000"/>
<text x="80" y="612.0" text-anchor="end" fill="#80803a" stroke="#80803a" stroke-width="0.2">30.00</text>
<rect x="89" y="648.7" width="9" height="1.2" fill="#808000"/>
<text x="80" y="653.2" text-anchor="end" fill="#80803a" stroke="#80803a" stroke-width="0.2">20.00</text>
<rect x="89" y="690.0" width="9" height="1.2" fill="#808000"/>
<text x="80" y="694.5" text-anchor="end" fill="#80803a" stroke="#80803a" stroke-width="0.2">10.00</text>
<rect x="89" y="731.3" width="9" height="1.2" fill="#808000"/>
<text x="80" y="735.8" text-anchor="end" fill="#80803a" stroke="#80803a" stroke-width="0.2">0.00</text>
<rect x="89" y="772.6" width="9" height="1.2" fill="#808000"/>
<text x="80" y="777.1" text-anchor="end" fill="#80803a" stroke="#80803a" stroke-width="0.2">-10.00</text>
<rect x="1248" y="389.1" width="8" height="1.2" fill="#4a4ac8"/>
<text x="1264" y="393.6" fill="#2a2ac0" stroke="#2a2ac0" stroke-width="0.25">0.0</text>
<rect x="1248" y="443.9" width="8" height="1.2" fill="#4a4ac8"/>
<text x="1264" y="448.4" fill="#2a2ac0" stroke="#2a2ac0" stroke-width="0.25">-20.0</text>
<rect x="1248" y="498.7" width="8" height="1.2" fill="#4a4ac8"/>
<text x="1264" y="503.2" fill="#2a2ac0" stroke="#2a2ac0" stroke-width="0.25">-40.0</text>
<rect x="1248" y="553.5" width="8" height="1.2" fill="#4a4ac8"/>
<text x="1264" y="558.0" fill="#2a2ac0" stroke="#2a2ac0" stroke-width="0.25">-60.0</text>
<rect x="1248" y="608.3" width="8" height="1.2" fill="#4a4ac8"/>
<text x="1264" y="612.8" fill="#2a2ac0" stroke="#2a2ac0" stroke-width="0.25">-80.0</text>
<rect x="1248" y="663.1" width="8" height="1.2" fill="#4a4ac8"/>
<text x="1264" y="667.6" fill="#2a2ac0" stroke="#2a2ac0" stroke-width="0.25">-100.0</text>
<rect x="1248" y="717.9" width="8" height="1.2" fill="#4a4ac8"/>
<text x="1264" y="722.4" fill="#2a2ac0" stroke="#2a2ac0" stroke-width="0.25">-120.0</text>
<rect x="1248" y="772.7" width="8" height="1.2" fill="#4a4ac8"/>
<text x="1264" y="777.2" fill="#2a2ac0" stroke="#2a2ac0" stroke-width="0.25">-140.0</text>
<rect x="125.2" y="768.5" width="1.2" height="8" fill="#000"/>
<text x="125.7" y="792.5" text-anchor="middle" fill="#333">50.0</text>
<rect x="228.0" y="768.5" width="1.2" height="8" fill="#000"/>
<text x="228.5" y="792.5" text-anchor="middle" fill="#333">100.0</text>
<rect x="330.8" y="768.5" width="1.2" height="8" fill="#000"/>
<text x="331.2" y="792.5" text-anchor="middle" fill="#333">150.0</text>
<rect x="433.5" y="768.5" width="1.2" height="8" fill="#000"/>
<text x="434.0" y="792.5" text-anchor="middle" fill="#333">200.0</text>
<rect x="536.3" y="768.5" width="1.2" height="8" fill="#000"/>
<text x="536.8" y="792.5" text-anchor="middle" fill="#333">250.0</text>
<rect x="639.1" y="768.5" width="1.2" height="8" fill="#000"/>
<text x="639.6" y="792.5" text-anchor="middle" fill="#333">300.0</text>
<rect x="741.9" y="768.5" width="1.2" height="8" fill="#000"/>
<text x="742.4" y="792.5" text-anchor="middle" fill="#333">350.0</text>
<rect x="844.6" y="768.5" width="1.2" height="8" fill="#000"/>
<text x="845.1" y="792.5" text-anchor="middle" fill="#333">400.0</text>
<rect x="947.4" y="768.5" width="1.2" height="8" fill="#000"/>
<text x="947.9" y="792.5" text-anchor="middle" fill="#333">450.0</text>
<rect x="1050.2" y="768.5" width="1.2" height="8" fill="#000"/>
<text x="1050.7" y="792.5" text-anchor="middle" fill="#333">500.0</text>
<rect x="1153.0" y="768.5" width="1.2" height="8" fill="#000"/>
<text x="1153.5" y="792.5" text-anchor="middle" fill="#333">550.0</text>
<text x="1256.2" y="792.5" text-anchor="middle" fill="#333">600.0</text>
<text x="672" y="804.6" text-anchor="middle" font-size="10.5" fill="#222">Temp Cel</text>
<text transform="translate(40.5 568.5) rotate(-90)" text-anchor="middle" font-size="10" fill="#8a8a40">DSC mW</text>
<text transform="translate(1314 569) rotate(-90)" text-anchor="middle" font-size="10.5" fill="#2020d0">TG %</text>
</g>
<path d="M88.0 389.7 C123.3 389.7 231.3 389.7 300.0 389.7 C368.7 389.7 446.7 389.7 500.0 389.7 C553.3 389.7 596.7 389.7 620.0 389.8 C643.3 389.9 633.3 390.2 640.0 390.5 C646.7 390.8 653.3 390.9 660.0 391.3 C666.7 391.7 671.7 391.9 680.0 392.7 C688.3 393.5 699.9 394.8 709.8 396.4 C719.7 398.0 729.7 399.9 739.6 402.4 C749.5 404.9 759.5 407.8 769.4 411.3 C779.3 414.8 789.3 418.9 799.2 423.2 C809.1 427.5 819.1 431.4 829.0 437.4 C838.9 443.4 851.8 453.4 858.8 459.0 C865.8 464.6 866.7 466.4 870.9 471.2 C875.1 476.0 879.9 482.0 883.8 488.0 C887.7 494.0 890.7 500.9 894.1 507.3 C897.5 513.7 902.7 523.4 904.4 526.6" fill="none" stroke="#0000f0" stroke-width="5" stroke-linecap="round" stroke-linejoin="round"/>
<path d="M904.4 526.6 C905.7 529.6 910.0 539.6 912.3 544.7 C914.6 549.8 916.4 552.9 918.4 557.0 C920.4 561.1 922.5 565.2 924.5 569.3 C926.5 573.4 928.7 577.6 930.7 581.5 C932.8 585.4 934.8 589.3 936.8 592.6 C938.8 595.9 940.8 598.8 942.9 601.2 C945.0 603.7 947.0 605.6 949.1 607.3 C951.2 609.0 953.2 610.4 955.2 611.6 C957.2 612.8 958.2 613.5 961.3 614.7 C964.4 615.9 969.5 617.6 973.6 618.6 C977.7 619.6 981.5 620.2 985.9 621.0 C990.3 621.8 991.2 622.1 1000.0 623.2 C1008.8 624.3 1025.9 626.2 1038.8 627.4 C1051.7 628.6 1066.2 629.0 1077.5 630.3 C1088.8 631.6 1096.9 633.4 1106.6 635.2 C1116.3 637.0 1126.0 638.6 1135.7 641.0 C1145.4 643.4 1155.0 647.1 1164.7 649.7 C1174.4 652.3 1184.1 654.6 1193.8 656.5 C1203.5 658.4 1212.5 659.8 1222.9 660.8 C1233.3 661.8 1250.5 662.4 1256.0 662.7" fill="none" stroke="#0000f0" stroke-width="2.2" stroke-linejoin="round"/>
<path d="M89.0 731.0 C90.2 730.7 92.5 729.6 96.0 729.0 C99.5 728.4 104.1 727.7 109.8 727.3 C115.5 726.9 120.1 726.9 130.0 726.8 C139.9 726.6 152.9 726.8 169.4 726.4 C185.9 726.0 209.1 725.5 229.0 724.3 C248.9 723.1 268.7 721.1 288.6 719.3 C308.5 717.5 328.4 714.9 348.3 713.3 C368.2 711.6 385.9 710.5 407.9 709.4 C429.8 708.3 462.3 706.9 480.0 706.5 C497.7 706.1 505.1 706.8 514.0 707.0 C523.0 707.2 528.5 707.2 533.7 708.0 C538.9 708.8 542.3 711.5 545.3 711.6 C548.3 711.8 544.6 710.8 551.6 708.9 C558.6 707.0 575.4 703.1 587.3 700.0 C599.2 696.9 611.2 693.8 623.1 690.1 C635.0 686.4 647.0 682.1 658.9 677.6 C670.8 673.1 685.8 666.4 694.7 663.3 C703.7 660.2 706.1 659.8 712.6 658.8 C719.1 657.8 725.9 657.4 734.0 657.4 C742.1 657.4 748.3 657.1 761.4 658.5 C774.5 659.9 799.7 664.2 812.8 666.0 C825.9 667.8 833.2 668.4 840.0 669.1 C846.8 669.8 848.9 670.0 853.4 670.4 C857.9 670.8 863.1 671.4 866.8 671.8 C870.5 672.2 873.1 673.1 875.8 672.6 C878.5 672.1 879.9 669.6 882.9 668.6 C885.9 667.6 890.7 667.6 893.7 666.8 C896.7 666.0 898.4 663.9 900.8 663.7 C903.2 663.5 906.8 665.2 908.0 665.5" fill="none" stroke="#808000" stroke-width="5" stroke-linecap="round" stroke-linejoin="round"/>
<path d="M908.0 665.5 C909.6 665.9 913.3 666.3 917.9 667.9 C922.5 669.5 929.8 672.6 935.8 675.0 C941.8 677.4 947.2 680.1 953.7 682.2 C960.2 684.3 966.2 686.1 975.1 687.6 C984.0 689.1 997.4 690.3 1007.3 691.1 C1017.1 691.9 1025.2 692.5 1034.2 692.4 C1043.2 692.3 1052.1 691.5 1061.0 690.3 C1069.9 689.0 1078.8 686.8 1087.8 684.9 C1096.8 683.0 1107.8 679.9 1114.7 678.6 C1121.6 677.4 1124.3 677.2 1129.0 677.4 C1133.7 677.6 1138.6 678.1 1143.0 679.6 C1147.4 681.1 1151.1 683.5 1155.2 686.4 C1159.3 689.3 1163.4 693.0 1167.5 696.8 C1171.6 700.6 1175.7 705.5 1179.8 709.1 C1183.9 712.7 1187.9 715.8 1192.0 718.3 C1196.1 720.8 1200.2 722.0 1204.3 724.4 C1208.4 726.8 1212.5 729.7 1216.6 732.4 C1220.7 735.1 1224.7 738.1 1228.8 740.4 C1232.9 742.6 1236.6 744.5 1241.1 745.9 C1245.6 747.3 1253.3 748.1 1255.8 748.6" fill="none" stroke="#808000" stroke-width="2.3" stroke-linejoin="round"/>
<rect x="1340" y="811" width="1.2" height="4" fill="#111"/>
</svg>
</body></html>
